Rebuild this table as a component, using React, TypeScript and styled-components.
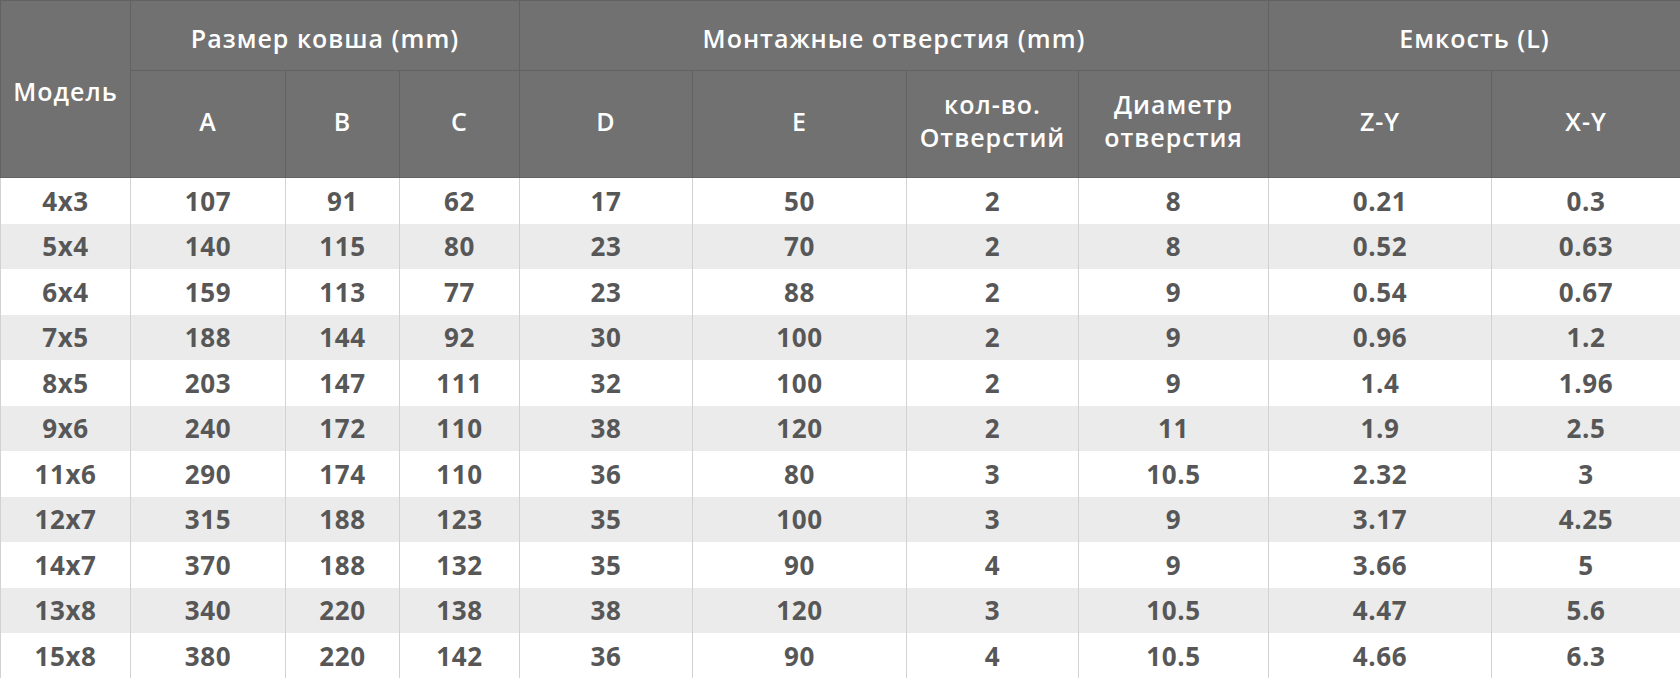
import styled, { createGlobalStyle } from 'styled-components';

const Global = createGlobalStyle`
    html, body {
        margin: 0;
        padding: 0;
        background: #ffffff;
    }
`

const Table = styled.table`
    width: 1680px;
    border-collapse: collapse;
    table-layout: fixed;
    font-family: 'Open Sans', 'DejaVu Sans', sans-serif;

    th {
        background: #717171;
        color: #ffffff;
        font-weight: 600;
        font-size: 25px;
        letter-spacing: 1px;
        white-space: nowrap;
        border: 1px solid #626262;
        text-align: center;
        padding: 0;
    }

    td {
        height: 45.5px;
        padding: 0;
        text-align: center;
        color: #575757;
        font-weight: 700;
        font-size: 26px;
        letter-spacing: 0.6px;
        border-left: 1px solid #d2d2d2;
        border-right: 1px solid #d2d2d2;
    }

    tbody tr:nth-child(even) td {
        background: #ebebeb;
    }
`

const GroupRow = styled.tr`
    height: 70px;
    th {
        line-height: 30px;
        padding-top: 4px;
    }
`

const SubRow = styled.tr`
    height: 107px;
    th {
        line-height: 33px;
        padding-bottom: 6px;
    }
`

const widths = [130, 155, 114, 120, 173, 214, 172, 190, 223, 189];

const rows = [
    ['4x3', '107', '91', '62', '17', '50', '2', '8', '0.21', '0.3'],
    ['5x4', '140', '115', '80', '23', '70', '2', '8', '0.52', '0.63'],
    ['6x4', '159', '113', '77', '23', '88', '2', '9', '0.54', '0.67'],
    ['7x5', '188', '144', '92', '30', '100', '2', '9', '0.96', '1.2'],
    ['8x5', '203', '147', '111', '32', '100', '2', '9', '1.4', '1.96'],
    ['9x6', '240', '172', '110', '38', '120', '2', '11', '1.9', '2.5'],
    ['11x6', '290', '174', '110', '36', '80', '3', '10.5', '2.32', '3'],
    ['12x7', '315', '188', '123', '35', '100', '3', '9', '3.17', '4.25'],
    ['14x7', '370', '188', '132', '35', '90', '4', '9', '3.66', '5'],
    ['13x8', '340', '220', '138', '38', '120', '3', '10.5', '4.47', '5.6'],
    ['15x8', '380', '220', '142', '36', '90', '4', '10.5', '4.66', '6.3'],
];

const App = () => {
    return (
        <>
            <Global />
            <Table>
                <colgroup>
                    {widths.map((w, i) => <col key={i} style={{ width: w }} />)}
                </colgroup>
                <thead>
                    <GroupRow>
                        <th rowSpan={2}>Модель</th>
                        <th colSpan={3}>Размер ковша (mm)</th>
                        <th colSpan={4}>Монтажные отверстия (mm)</th>
                        <th colSpan={2}>Емкость (L)</th>
                    </GroupRow>
                    <SubRow>
                        <th>A</th>
                        <th>B</th>
                        <th>C</th>
                        <th>D</th>
                        <th>E</th>
                        <th>кол-во.<br />Отверстий</th>
                        <th>Диаметр<br />отверстия</th>
                        <th>Z-Y</th>
                        <th>X-Y</th>
                    </SubRow>
                </thead>
                <tbody>
                    {rows.map((r) => (
                        <tr key={r[0]}>
                            {r.map((c, i) => <td key={i}>{c}</td>)}
                        </tr>
                    ))}
                </tbody>
            </Table>
        </>
    )
}

export default App
